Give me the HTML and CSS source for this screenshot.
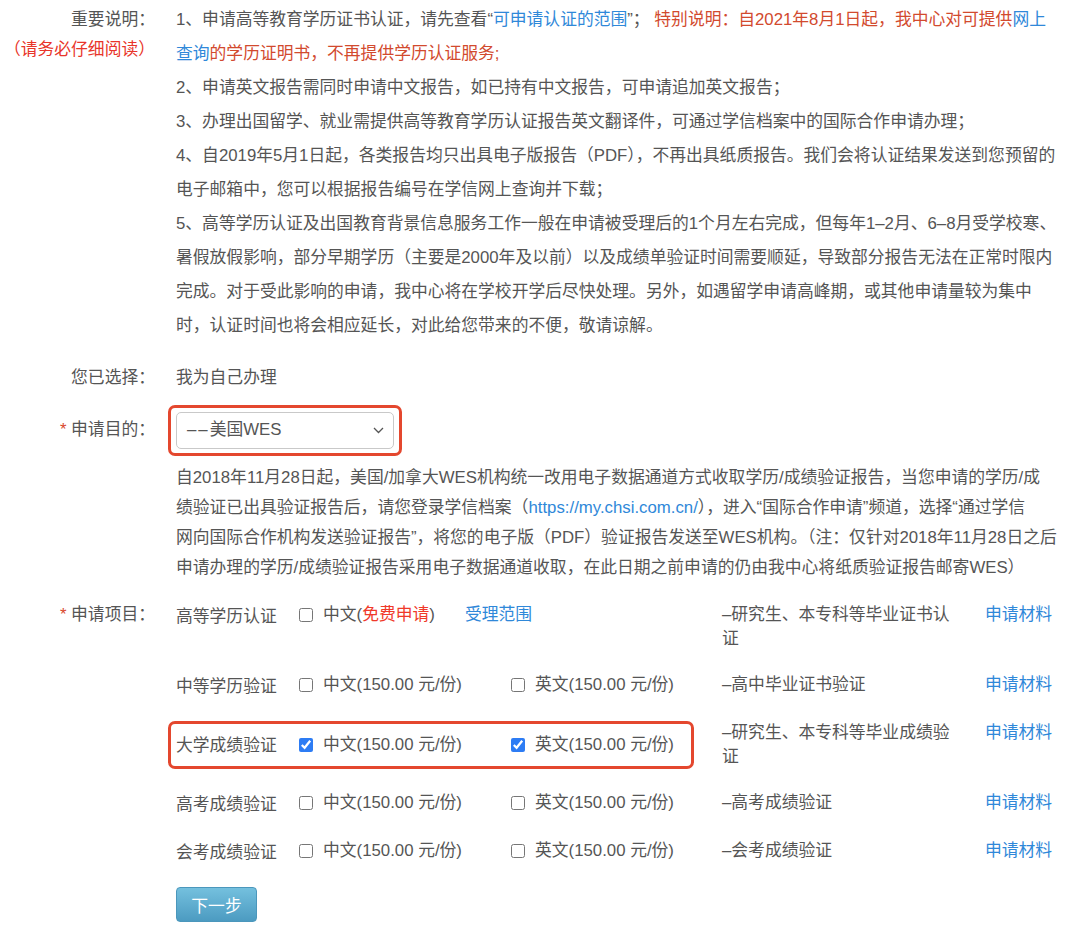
FILE: index.html
```html
<!DOCTYPE html>
<html lang="zh-CN">
<head>
<meta charset="utf-8">
<title>申请认证</title>
<link rel="stylesheet" href="styles.css">
</head>
<body>
<div class="page">
  <div class="field field-notice">
    <div class="label label-stack">
      <span>重要说明：</span>
      <span class="label-warn">（请务必仔细阅读）</span>
    </div>
    <div class="content notice">
      <p>1、申请高等教育学历证书认证，请先查看“<a class="link">可申请认证的范围</a>”； <span class="warn">特别说明：自2021年8月1日起，我中心对可提供</span><a class="link">网上<br>查询</a><span class="warn">的学历证明书，不再提供学历认证服务;</span></p>
      <p>2、申请英文报告需同时申请中文报告，如已持有中文报告，可申请追加英文报告；</p>
      <p>3、办理出国留学、就业需提供高等教育学历认证报告英文翻译件，可通过学信档案中的国际合作申请办理；</p>
      <p>4、自2019年5月1日起，各类报告均只出具电子版报告（PDF），不再出具纸质报告。我们会将认证结果发送到您预留的<br>电子邮箱中，您可以根据报告编号在学信网上查询并下载；</p>
      <p>5、高等学历认证及出国教育背景信息服务工作一般在申请被受理后的1个月左右完成，但每年1–2月、6–8月受学校寒、<br>暑假放假影响，部分早期学历（主要是2000年及以前）以及成绩单验证时间需要顺延，导致部分报告无法在正常时限内<br>完成。对于受此影响的申请，我中心将在学校开学后尽快处理。另外，如遇留学申请高峰期，或其他申请量较为集中<br>时，认证时间也将会相应延长，对此给您带来的不便，敬请谅解。</p>
    </div>
  </div>

  <div class="field field-chosen">
    <div class="label">您已选择：</div>
    <div class="content">我为自己办理</div>
  </div>

  <div class="field field-purpose">
    <div class="label label-purpose"><span class="req">*</span> 申请目的：</div>
    <div class="content">
      <div class="mark-select">
        <div class="select">
          <span class="select-value"><span class="dashes">––</span>美国WES</span>
          <svg class="chevron" width="11" height="7" viewBox="0 0 11 7"><path d="M1 1 L5.5 5.5 L10 1" fill="none" stroke="#555" stroke-width="1.3"/></svg>
        </div>
      </div>
      <p class="wes-note">自2018年11月28日起，美国/加拿大WES机构统一改用电子数据通道方式收取学历/成绩验证报告，当您申请的学历/成<br>绩验证已出具验证报告后，请您登录学信档案（<a class="link">https://my.chsi.com.cn/</a>），进入“国际合作申请”频道，选择“通过学信<br>网向国际合作机构发送验证报告”，将您的电子版（PDF）验证报告发送至WES机构。（注：仅针对2018年11月28日之后<br>申请办理的学历/成绩验证报告采用电子数据通道收取，在此日期之前申请的仍由我中心将纸质验证报告邮寄WES）</p>
    </div>
  </div>

  <div class="field field-items">
    <div class="label label-items"><span class="req">*</span> 申请项目：</div>
    <div class="content items">
      <div class="item">
        <div class="item-main">
          <span class="item-name">高等学历认证</span>
          <span class="item-opt item-opt-wide"><label class="opt"><input type="checkbox"><span>中文(<span class="free">免费申请</span>)</span></label><a class="link scope">受理范围</a></span>
        </div>
        <div class="item-desc">–研究生、本专科等毕业证书认证</div>
        <a class="link item-link">申请材料</a>
      </div>

      <div class="item">
        <div class="item-main">
          <span class="item-name">中等学历验证</span>
          <span class="item-opt"><label class="opt"><input type="checkbox"><span>中文(150.00 元/份)</span></label></span>
          <span class="item-opt"><label class="opt"><input type="checkbox"><span>英文(150.00 元/份)</span></label></span>
        </div>
        <div class="item-desc">–高中毕业证书验证</div>
        <a class="link item-link">申请材料</a>
      </div>

      <div class="item">
        <div class="item-main item-main-marked">
          <span class="item-name">大学成绩验证</span>
          <span class="item-opt"><label class="opt"><input type="checkbox" checked><span>中文(150.00 元/份)</span></label></span>
          <span class="item-opt"><label class="opt"><input type="checkbox" checked><span>英文(150.00 元/份)</span></label></span>
        </div>
        <div class="item-desc">–研究生、本专科等毕业成绩验证</div>
        <a class="link item-link">申请材料</a>
      </div>

      <div class="item">
        <div class="item-main">
          <span class="item-name">高考成绩验证</span>
          <span class="item-opt"><label class="opt"><input type="checkbox"><span>中文(150.00 元/份)</span></label></span>
          <span class="item-opt"><label class="opt"><input type="checkbox"><span>英文(150.00 元/份)</span></label></span>
        </div>
        <div class="item-desc">–高考成绩验证</div>
        <a class="link item-link">申请材料</a>
      </div>

      <div class="item">
        <div class="item-main">
          <span class="item-name">会考成绩验证</span>
          <span class="item-opt"><label class="opt"><input type="checkbox"><span>中文(150.00 元/份)</span></label></span>
          <span class="item-opt"><label class="opt"><input type="checkbox"><span>英文(150.00 元/份)</span></label></span>
        </div>
        <div class="item-desc">–会考成绩验证</div>
        <a class="link item-link">申请材料</a>
      </div>
    </div>
  </div>

  <div class="actions">
    <button class="btn-next" type="button">下一步</button>
  </div>
</div>
</body>
</html>
```

FILE: styles.css
```css
html, body {
  margin: 0;
  padding: 0;
  background: #ffffff;
}

body {
  font-family: "Liberation Sans", "Noto Sans CJK SC", sans-serif;
  font-size: 16.8px;
  color: #555555;
}

.page {
  padding-top: 3px;
  width: 1080px;
}

.field {
  display: grid;
  grid-template-columns: 155px 1fr;
  column-gap: 21px;
}

.label {
  text-align: right;
  line-height: 34px;
  white-space: nowrap;
}

.label-stack {
  display: flex;
  flex-direction: column;
  align-items: flex-end;
  padding-top: 2px;
  line-height: 30px;
}

.label-warn {
  color: #e8352a;
}

.req {
  color: #d9472d;
}

.content {
  line-height: 34px;
  min-width: 0;
}

.notice p {
  margin: 0;
  white-space: nowrap;
}

.link {
  color: #2f88d9;
  text-decoration: none;
  cursor: pointer;
}

.warn {
  color: #d24a2e;
}

.field-chosen {
  margin-top: 18px;
}

.field-purpose {
  margin-top: 10px;
}

.label-purpose {
  padding-top: 8px;
}

.mark-select {
  width: max-content;
  border: 3px solid #e4472e;
  border-radius: 7px;
  padding: 4px 5px;
  margin-left: -8px;
}

.select {
  box-sizing: border-box;
  width: 218px;
  height: 37px;
  border: 1px solid #c9c9c9;
  border-radius: 5px;
  background: #ffffff;
  display: flex;
  align-items: center;
  justify-content: space-between;
  padding: 0 9px 0 10px;
  line-height: 1;
}

.dashes {
  letter-spacing: 2px;
}

.chevron {
  display: block;
}

.wes-note {
  margin: 7px 0 0;
  line-height: 30px;
  white-space: nowrap;
}

.field-items {
  margin-top: 20px;
}

.label-items {
  line-height: 24px;
}

.items {
  display: flex;
  flex-direction: column;
  row-gap: 22px;
  line-height: 24px;
}

.item {
  display: flex;
  align-items: flex-start;
}

.item-main {
  display: grid;
  grid-template-columns: 123px 212px 175px;
  align-items: start;
  align-self: stretch;
}

.item-main-marked {
  align-items: center;
  border: 3px solid #e4472e;
  border-radius: 7px;
  padding: 0 5px;
  margin: 0 -8px;
  box-sizing: border-box;
}

.item-name {
  white-space: nowrap;
  padding-top: 2px;
}

.item-opt {
  display: flex;
  align-items: center;
  white-space: nowrap;
}

.item-opt-wide {
  grid-column: span 2;
}

.opt {
  display: inline-flex;
  align-items: center;
  gap: 10px;
  cursor: pointer;
}

.opt input {
  width: 14px;
  height: 14px;
  margin: 0;
  accent-color: #2d7cf4;
}

.free {
  color: #f0392a;
}

.scope {
  margin-left: 30px;
}

.item-desc {
  width: 240px;
  margin-left: 36px;
}

.item-link {
  margin-left: 23px;
  white-space: nowrap;
}

.actions {
  padding-left: 176px;
  margin-top: 22px;
}

.btn-next {
  width: 81px;
  height: 35px;
  border: 1px solid #4b97bc;
  border-radius: 4px;
  background: linear-gradient(#74c0de, #4c9bc1);
  color: #ffffff;
  font-family: "Liberation Sans", "Noto Sans CJK SC", sans-serif;
  font-size: 16.8px;
  padding: 0;
  cursor: pointer;
}
```
